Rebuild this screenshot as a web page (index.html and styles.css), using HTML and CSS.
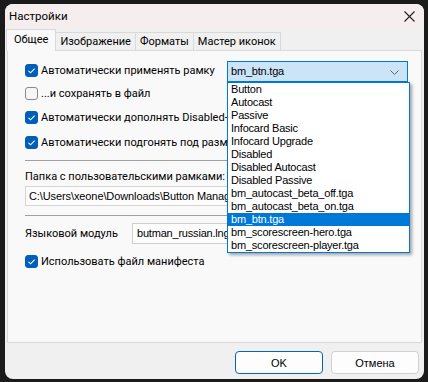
FILE: index.html
```html
<!DOCTYPE html>
<html lang="ru">
<head>
  <meta charset="UTF-8">
  <title>Настройки</title>
  <link rel="stylesheet" href="styles.css">
</head>
<body>
  <div class="window">
    <div class="titlebar">
      <span class="title">Настройки</span>
      <svg class="close" width="11" height="11" viewBox="0 0 11 11">
        <path d="M0.5 0.5 L10.5 10.5 M10.5 0.5 L0.5 10.5" stroke="#222" stroke-width="1.1" fill="none"/>
      </svg>
    </div>
    <div class="tabs">
      <div class="tab active">Общее</div>
      <div class="tab">Изображение</div>
      <div class="tab">Форматы</div>
      <div class="tab">Мастер иконок</div>
    </div>
    <div class="panel">
      <div class="row row-first">
        <label class="check"><span class="box checked"></span>Автоматически применять рамку</label>
        <div class="combo open">bm_btn.tga
          <svg class="chev" width="9" height="5" viewBox="0 0 9 5"><path d="M0.5 0.5 L4.5 4.5 L8.5 0.5" stroke="#666" fill="none"/></svg>
        </div>
      </div>
      <div class="row row-2"><label class="check"><span class="box"></span>...и сохранять в файл</label></div>
      <div class="row row-3"><label class="check clip"><span class="box checked"></span>Автоматически дополнять Disabled-версии</label></div>
      <div class="row row-4"><label class="check clip"><span class="box checked"></span>Автоматически подгонять под размер</label></div>
      <div class="sep"></div>
      <div class="caption">Папка с пользовательскими рамками:</div>
      <div class="field"><span class="field-text">C:\Users\xeone\Downloads\Button Manager\Borders</span></div>
      <div class="sep sep-low"></div>
      <div class="row lang">
        <span class="caption lang-caption">Языковой модуль</span>
        <div class="combo lang-combo">butman_russian.lng</div>
      </div>
      <div class="row row-5"><label class="check"><span class="box checked"></span>Использовать файл манифеста</label></div>

      <ul class="droplist">
        <li>Button</li>
        <li>Autocast</li>
        <li>Passive</li>
        <li>Infocard Basic</li>
        <li>Infocard Upgrade</li>
        <li>Disabled</li>
        <li>Disabled Autocast</li>
        <li>Disabled Passive</li>
        <li>bm_autocast_beta_off.tga</li>
        <li>bm_autocast_beta_on.tga</li>
        <li class="selected">bm_btn.tga</li>
        <li>bm_scorescreen-hero.tga</li>
        <li>bm_scorescreen-player.tga</li>
      </ul>
    </div>
    <div class="footer">
      <button class="btn default">OK</button>
      <button class="btn">Отмена</button>
    </div>
  </div>
</body>
</html>
```

FILE: styles.css
```css
html, body {
  margin: 0;
  height: 100%;
  background-color: #1b1b1b;
}
body {
  padding: 4px 4px 3px 5px;
  box-sizing: border-box;
  font-family: Roboto, 'Noto Sans', sans-serif;
  font-size: 11px;
  color: #000;
}
.window {
  width: 419px;
  height: 375px;
  background-color: #f0f0f0;
  border-radius: 8px;
  overflow: hidden;
  display: flex;
  flex-direction: column;
}
.titlebar {
  height: 24px;
  flex-shrink: 0;
  background-color: #f6eeee;
  display: flex;
  align-items: center;
  justify-content: space-between;
  padding: 0 9px 0 4px;
  font-size: 11.5px;
}
.title {
  line-height: 16px;
}
.close {
  margin-top: 1px;
}
.tabs {
  display: flex;
  align-items: flex-end;
  height: 22px;
  flex-shrink: 0;
  padding-left: 1px;
}
.tab {
  height: 18px;
  line-height: 17px;
  padding: 0 4px;
  border: 1px solid #d9d9d9;
  border-bottom: none;
  margin-right: -1px;
  box-sizing: border-box;
  background-color: #f0f0f0;
  white-space: nowrap;
}
.tab.active {
  height: 22px;
  line-height: 20px;
  padding: 0 7px;
  background-color: #f9f9f9;
  position: relative;
  z-index: 1;
  margin-bottom: -1px;
}
.panel {
  position: relative;
  margin: 0 2px;
  height: 293px;
  flex-shrink: 0;
  background-color: #f9f9f9;
  border: 1px solid #d9d9d9;
  box-sizing: border-box;
  padding: 10px 0 0 17px;
}
.row {
  display: flex;
  align-items: center;
  height: 20px;
}
.row-first {
  height: 21px;
  align-items: flex-start;
  justify-content: space-between;
}
.row-first .check {
  margin-top: 3px;
  line-height: 13px;
}
.row-2 { margin-top: 1px; }
.row-3 { margin-top: 4px; }
.row-4 { margin-top: 5px; }
.row-5 { margin-top: 7px; }
.check {
  display: flex;
  align-items: center;
  white-space: nowrap;
}
.check.clip {
  max-width: 202px;
  overflow: hidden;
}
.box {
  width: 11px;
  height: 11px;
  border: 1px solid #8a8a8a;
  border-radius: 3px;
  background-color: #f6f6f6;
  margin-right: 3px;
  flex-shrink: 0;
}
.box.checked {
  background-color: #005fb8;
  border-color: #005fb8;
  background-image: url("data:image/svg+xml,%3Csvg xmlns='http://www.w3.org/2000/svg' width='11' height='11'%3E%3Cpath d='M2.5 5.8 L4.6 7.8 L8.6 3.6' stroke='white' stroke-width='1.1' fill='none'/%3E%3C/svg%3E");
}
.combo {
  font-family: 'Liberation Sans', Arial, sans-serif;
  font-size: 11px;
  letter-spacing: -0.2px;
  box-sizing: border-box;
  height: 21px;
  line-height: 19px;
  padding-left: 3px;
  border: 1px solid #cfcfcf;
  background-color: #fdfdfd;
  position: relative;
  flex-shrink: 0;
}
.combo.open {
  width: 181px;
  margin-right: 13px;
  background-color: #cce4f7;
  border-color: #0078d7;
}
.chev {
  position: absolute;
  right: 8px;
  top: 8px;
}
.sep {
  height: 1px;
  background-color: #a0a0a0;
  width: 380px;
  margin: 8px 0 8px;
}
.sep-low {
  margin: 9px 0 0;
}
.caption {
  line-height: 16px;
  white-space: nowrap;
}
.field {
  font-family: 'Liberation Sans', Arial, sans-serif;
  font-size: 11px;
  letter-spacing: -0.1px;
  height: 20px;
  line-height: 18px;
  box-sizing: border-box;
  width: 380px;
  margin-top: 1px;
  padding-left: 3px;
  border: 1px solid #d5d5d5;
  background-color: #fdfdfd;
  white-space: nowrap;
}
.field-text {
  display: block;
  max-width: 198px;
  overflow: hidden;
}
.lang {
  height: 21px;
  margin-top: 7px;
}
.lang-caption {
  width: 107px;
  flex-shrink: 0;
}
.lang-combo {
  width: 102px;
  padding-left: 4px;
  white-space: nowrap;
}
.droplist {
  position: absolute;
  left: 219px;
  top: 31px;
  width: 181px;
  margin: 0;
  padding: 0;
  list-style: none;
  border: 1px solid #0078d7;
  background-color: #fff;
  box-shadow: 2px 2px 3px rgba(0, 0, 0, 0.35);
  font-family: 'Liberation Sans', Arial, sans-serif;
  font-size: 11px;
  letter-spacing: -0.2px;
  z-index: 2;
}
.droplist li {
  height: 13px;
  line-height: 13px;
  padding-left: 3px;
  white-space: nowrap;
}
.droplist li.selected {
  background-color: #0078d7;
  color: #fff;
}
.footer {
  flex: 1;
  display: flex;
  justify-content: flex-end;
  align-items: flex-start;
  gap: 8px;
  padding: 8px 5px 0 0;
}
.btn {
  width: 88px;
  height: 23px;
  border: 1px solid #d0d0d0;
  border-radius: 4px;
  background-color: #fdfdfd;
  font-family: 'Liberation Sans', Arial, sans-serif;
  font-size: 11px;
  color: #000;
  padding: 0;
}
.btn.default {
  border-color: #0067c0;
}
```
